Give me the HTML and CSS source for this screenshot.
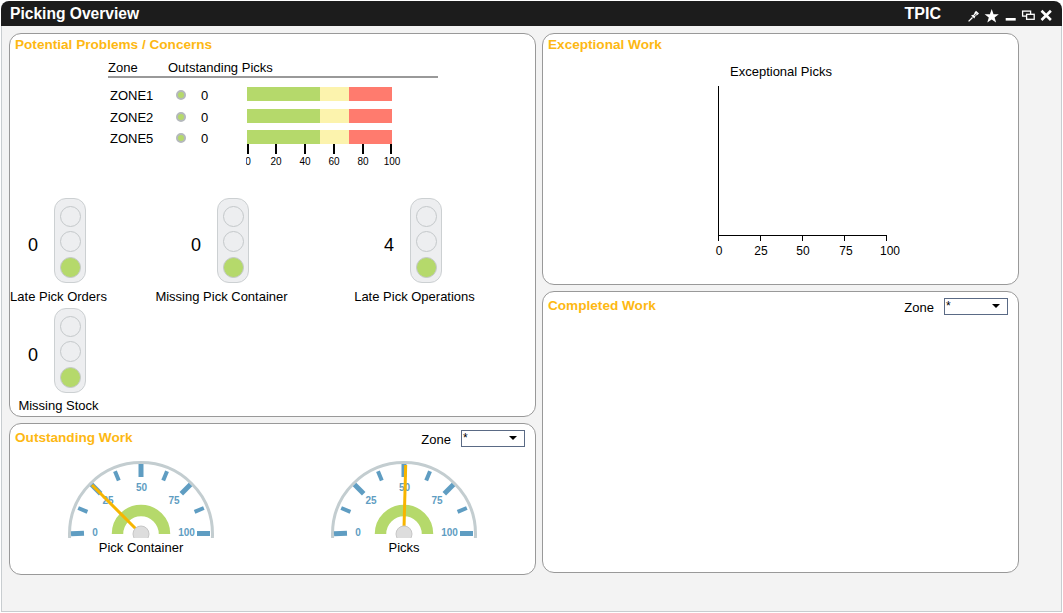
FILE: index.html
```html
<!DOCTYPE html>
<html>
<head>
  <title>Picking Overview</title>
  <link rel="stylesheet" href="styles.css">
</head>
<body>
  <div class="frame">
    <div class="titlebar">
      <span class="app-title">Picking Overview</span>
      <span class="user">TPIC</span>
      <svg class="icon" viewBox="0 0 16 21"><path d="M2.6 18.4 L6.5 14.5" stroke="#fff" stroke-width="1.3"/><path d="M5 12.5 L8 11.5 L8.6 9.4 L10 7.8 L13 10.6 L11.4 12 L9.6 12.8 L8.4 15.6 Z" fill="#fff"/><path d="M8.4 13 L10.6 10.6" stroke="#1c1c1c" stroke-width="0.8"/></svg>
      <svg class="icon" viewBox="0 0 16 21"><polygon points="7.7,6 9.5,11.2 14.8,11.2 10.6,14.4 12.1,19.5 7.7,16.4 3.3,19.5 4.8,14.4 0.6,11.2 5.9,11.2" fill="#fff"/></svg>
      <svg class="icon" viewBox="0 0 16 21"><rect x="3.7" y="15" width="10" height="2.6" fill="#fff"/></svg>
      <svg class="icon" viewBox="0 0 16 21"><rect x="2.6" y="8.1" width="8" height="5" fill="none" stroke="#fff" stroke-width="1.3"/><rect x="6.6" y="11.3" width="7.6" height="5" fill="#1c1c1c" stroke="#fff" stroke-width="1.3"/></svg>
      <svg class="icon" viewBox="0 0 16 21"><path d="M3.5 7.8 L12.9 17 M12.9 7.8 L3.5 17" stroke="#fff" stroke-width="2.6"/></svg>
    </div>

    <div class="content">
      <div class="col col-left">
        <div class="panel panel-problems">
          <div class="panel-title">Potential Problems / Concerns</div>

          <div class="zones">
            <div class="zones-head">
              <span class="zones-head-zone">Zone</span>
              <span>Outstanding Picks</span>
            </div>
            <div class="zones-rows">
              <span class="zone-name">ZONE1</span><span class="dot"></span><span class="zone-val">0</span>
              <div class="bar"><span class="bar-green"></span><span class="bar-yellow"></span><span class="bar-red"></span></div>
              <span class="zone-name">ZONE2</span><span class="dot"></span><span class="zone-val">0</span>
              <div class="bar"><span class="bar-green"></span><span class="bar-yellow"></span><span class="bar-red"></span></div>
              <span class="zone-name">ZONE5</span><span class="dot"></span><span class="zone-val">0</span>
              <div class="bar"><span class="bar-green"></span><span class="bar-yellow"></span><span class="bar-red"></span></div>
            </div>
            <svg class="bar-axis" width="170" height="24">
              <g stroke="#000" stroke-width="2">
                <line x1="2" y1="0" x2="2" y2="10"/>
                <line x1="30" y1="0" x2="30" y2="10"/>
                <line x1="59" y1="0" x2="59" y2="10"/>
                <line x1="88" y1="0" x2="88" y2="10"/>
                <line x1="117" y1="0" x2="117" y2="10"/>
                <line x1="145" y1="0" x2="145" y2="10"/>
              </g>
              <g class="axis-small" text-anchor="middle">
                <text x="2" y="21">0</text>
                <text x="30" y="21">20</text>
                <text x="59" y="21">40</text>
                <text x="88" y="21">60</text>
                <text x="117" y="21">80</text>
                <text x="146" y="21">100</text>
              </g>
            </svg>
          </div>

          <div class="lights">
            <div class="light-item">
              <div class="light-row">
                <span class="light-val">0</span>
                <div class="light"><span class="lamp"></span><span class="lamp"></span><span class="lamp lamp-on"></span></div>
              </div>
              <div class="light-label">Late Pick Orders</div>
            </div>
            <div class="light-item">
              <div class="light-row">
                <span class="light-val">0</span>
                <div class="light"><span class="lamp"></span><span class="lamp"></span><span class="lamp lamp-on"></span></div>
              </div>
              <div class="light-label">Missing Pick Container</div>
            </div>
            <div class="light-item">
              <div class="light-row">
                <span class="light-val">4</span>
                <div class="light"><span class="lamp"></span><span class="lamp"></span><span class="lamp lamp-on"></span></div>
              </div>
              <div class="light-label">Late Pick Operations</div>
            </div>
            <div class="light-item">
              <div class="light-row">
                <span class="light-val">0</span>
                <div class="light"><span class="lamp"></span><span class="lamp"></span><span class="lamp lamp-on"></span></div>
              </div>
              <div class="light-label light-label-tight">Missing Stock</div>
            </div>
          </div>
        </div>

        <div class="panel panel-outstanding">
          <div class="panel-head">
            <div class="panel-title">Outstanding Work</div>
            <div class="zone-filter">
              <span class="zone-filter-name">Zone</span>
              <div class="select">*</div>
            </div>
          </div>
          <div class="gauges">
            <div class="gauge">
              <svg width="150" height="80">
                <circle cx="75" cy="76" r="71.5" fill="none" stroke="#c3cdd0" stroke-width="3"/>
                <g stroke="#5f9dc2">
                  <line x1="5" y1="75.5" x2="18" y2="75.5" stroke-width="5" transform="rotate(-3 11.5 75.5)"/>
                  <line x1="7" y1="76" x2="17" y2="76" stroke-width="4" transform="rotate(22.5 75 76)"/>
                  <line x1="5" y1="76" x2="18" y2="76" stroke-width="5" transform="rotate(45 75 76)"/>
                  <line x1="7" y1="76" x2="17" y2="76" stroke-width="4" transform="rotate(67.5 75 76)"/>
                  <line x1="5" y1="76" x2="18" y2="76" stroke-width="5" transform="rotate(90 75 76)"/>
                  <line x1="7" y1="76" x2="17" y2="76" stroke-width="4" transform="rotate(112.5 75 76)"/>
                  <line x1="5" y1="76" x2="18" y2="76" stroke-width="5" transform="rotate(135 75 76)"/>
                  <line x1="7" y1="76" x2="17" y2="76" stroke-width="4" transform="rotate(157.5 75 76)"/>
                  <line x1="131" y1="75.5" x2="144" y2="75.5" stroke-width="5"/>
                </g>
                <path d="M51.5 76 A23.5 23.5 0 0 1 98.5 76" fill="none" stroke="#b5d96b" stroke-width="11.5"/>
                <g class="gauge-scale" text-anchor="middle">
                  <text x="29" y="78">0</text>
                  <text x="42" y="46">25</text>
                  <text x="75.5" y="33">50</text>
                  <text x="108" y="46">75</text>
                  <text x="120.5" y="78">100</text>
                </g>
                <line x1="26" y1="27" x2="72" y2="73" stroke="#f7b500" stroke-width="3"/>
                <circle cx="75" cy="76" r="8" fill="#ddd" stroke="#c6c6c6"/>
              </svg>
              <div class="gauge-label">Pick Container</div>
            </div>
            <div class="gauge">
              <svg width="150" height="80">
                <circle cx="75" cy="76" r="71.5" fill="none" stroke="#c3cdd0" stroke-width="3"/>
                <g stroke="#5f9dc2">
                  <line x1="5" y1="75.5" x2="18" y2="75.5" stroke-width="5" transform="rotate(-3 11.5 75.5)"/>
                  <line x1="7" y1="76" x2="17" y2="76" stroke-width="4" transform="rotate(22.5 75 76)"/>
                  <line x1="5" y1="76" x2="18" y2="76" stroke-width="5" transform="rotate(45 75 76)"/>
                  <line x1="7" y1="76" x2="17" y2="76" stroke-width="4" transform="rotate(67.5 75 76)"/>
                  <line x1="5" y1="76" x2="18" y2="76" stroke-width="5" transform="rotate(90 75 76)"/>
                  <line x1="7" y1="76" x2="17" y2="76" stroke-width="4" transform="rotate(112.5 75 76)"/>
                  <line x1="5" y1="76" x2="18" y2="76" stroke-width="5" transform="rotate(135 75 76)"/>
                  <line x1="7" y1="76" x2="17" y2="76" stroke-width="4" transform="rotate(157.5 75 76)"/>
                  <line x1="131" y1="75.5" x2="144" y2="75.5" stroke-width="5"/>
                </g>
                <path d="M51.5 76 A23.5 23.5 0 0 1 98.5 76" fill="none" stroke="#b5d96b" stroke-width="11.5"/>
                <g class="gauge-scale" text-anchor="middle">
                  <text x="29" y="78">0</text>
                  <text x="42" y="46">25</text>
                  <text x="75.5" y="33">50</text>
                  <text x="108" y="46">75</text>
                  <text x="120.5" y="78">100</text>
                </g>
                <line x1="76.7" y1="7" x2="75" y2="70" stroke="#f7b500" stroke-width="3"/>
                <circle cx="75" cy="76" r="8" fill="#ddd" stroke="#c6c6c6"/>
              </svg>
              <div class="gauge-label">Picks</div>
            </div>
          </div>
        </div>
      </div>

      <div class="col col-right">
        <div class="panel panel-exceptional">
          <div class="panel-title">Exceptional Work</div>
          <svg class="exc-chart" width="250" height="216">
            <text class="exc-title" x="76" y="21">Exceptional Picks</text>
            <g stroke="#000" fill="none">
              <line x1="64.5" y1="31" x2="64.5" y2="181"/>
              <line x1="64" y1="180.5" x2="233" y2="180.5"/>
              <line x1="64.5" y1="180" x2="64.5" y2="186"/>
              <line x1="106.5" y1="180" x2="106.5" y2="186"/>
              <line x1="148.5" y1="180" x2="148.5" y2="186"/>
              <line x1="190.5" y1="180" x2="190.5" y2="186"/>
              <line x1="232.5" y1="180" x2="232.5" y2="186"/>
            </g>
            <g class="exc-scale" text-anchor="middle">
              <text x="65" y="200">0</text>
              <text x="107" y="200">25</text>
              <text x="149" y="200">50</text>
              <text x="192" y="200">75</text>
              <text x="236" y="200">100</text>
            </g>
          </svg>
        </div>

        <div class="panel panel-completed">
          <div class="panel-head">
            <div class="panel-title">Completed Work</div>
            <div class="zone-filter">
              <span class="zone-filter-name">Zone</span>
              <div class="select">*</div>
            </div>
          </div>
        </div>
      </div>
    </div>
  </div>
</body>
</html>
```

FILE: styles.css
```css
body {
  margin: 0;
  padding: 0;
  background-color: #fff;
  color: #000;
  font-family: "Liberation Sans", Arial, sans-serif;
  font-size: 13px;
}

.frame {
  width: 1061px;
  height: 611px;
  margin: 1px 0 0 1px;
  display: flex;
  flex-direction: column;
}

.titlebar {
  height: 25px;
  flex: none;
  display: flex;
  align-items: center;
  gap: 2px;
  padding: 0 8px 0 9px;
  background-color: #1c1c1c;
  border-radius: 8px 8px 0 0;
  color: #fff;
}

.app-title {
  font-size: 15.6px;
  font-weight: bold;
}

.user {
  margin-left: auto;
  margin-right: 23px;
  font-size: 16px;
  font-weight: bold;
}

.icon {
  width: 16px;
  height: 21px;
}

.content {
  flex: 1;
  display: flex;
  gap: 6px;
  padding: 7px 0 0 7px;
  background-color: #f3f3f3;
  border: 1px solid #c8cdd0;
  border-top: none;
}

.col {
  display: flex;
  flex-direction: column;
  gap: 6px;
}

.col-left {
  width: 527px;
}

.col-right {
  width: 477px;
}

.panel {
  background-color: #fff;
  border: 1px solid #999;
  border-radius: 12px;
  box-sizing: border-box;
}

.panel-problems {
  height: 384px;
}

.panel-outstanding {
  height: 152px;
}

.panel-exceptional {
  height: 252px;
}

.panel-completed {
  height: 282px;
}

.panel-title {
  height: 16px;
  padding: 3px 0 0 5px;
  line-height: 16px;
  font-size: 13.6px;
  font-weight: bold;
  color: #fdb813;
}

.panel-head {
  display: flex;
  justify-content: space-between;
  align-items: flex-start;
  padding: 3px 10px 0 0;
}

.zone-filter {
  display: flex;
  align-items: center;
  gap: 10px;
  margin-top: 3px;
}

.zone-filter-name {
  padding-top: 2px;
}

.select {
  position: relative;
  width: 64px;
  height: 17px;
  box-sizing: border-box;
  padding-left: 1px;
  border: 1px solid #5a6a85;
  line-height: 14px;
  font-size: 12px;
}

.select::after {
  content: "";
  position: absolute;
  top: 5px;
  right: 7px;
  border-style: solid;
  border-width: 4px 4px 0;
  border-color: #000 transparent transparent;
}

/* zone table */
.zones {
  margin: 7px 0 0 98px;
}

.zones-head {
  display: flex;
  width: 330px;
  height: 16px;
  line-height: 16px;
  border-bottom: 2px solid #999;
}

.zones-head-zone {
  width: 60px;
}

.zones-rows {
  display: grid;
  grid-template-columns: 66px 10px 61px 145px;
  grid-auto-rows: 14px;
  row-gap: 7.5px;
  align-items: center;
  margin: 9px 0 0 2px;
}

.zone-name {
  padding-top: 3px;
}

.dot {
  width: 6px;
  height: 6px;
  margin-top: 2px;
  background-color: #b5d96b;
  border: 2px solid #b4b8bc;
  border-radius: 50%;
}

.zone-val {
  padding: 3px 0 0 15px;
}

.bar {
  display: flex;
  height: 14px;
}

.bar-green {
  width: 73px;
  background-color: #b5d96b;
}

.bar-yellow {
  width: 29px;
  background-color: #fcf3ad;
}

.bar-red {
  width: 43px;
  background-color: #ff7b6e;
}

.bar-axis {
  display: block;
  margin-left: 138px;
}

.axis-small {
  font-size: 10px;
}

/* traffic lights */
.lights {
  display: grid;
  grid-template-columns: 97px 229px 157px;
  row-gap: 3px;
  margin-top: 30px;
}

.light-item {
  display: flex;
  flex-direction: column;
  align-items: center;
  white-space: nowrap;
}

.light-row {
  display: flex;
  align-items: center;
  gap: 9px;
  padding-right: 10px;
}

.light-val {
  width: 24px;
  padding-top: 10px;
  text-align: center;
  font-size: 18px;
}

.light {
  display: flex;
  flex-direction: column;
  align-items: center;
  gap: 4px;
  width: 32px;
  height: 85px;
  box-sizing: border-box;
  padding-top: 7px;
  background-color: #edeef0;
  border: 1px solid #ccd0d2;
  border-radius: 12px;
}

.lamp {
  width: 19px;
  height: 19px;
  flex: none;
  background-color: #edeef0;
  border: 1px solid #c4c8ca;
  border-radius: 50%;
}

.lamp-on {
  margin-top: 1px;
  background-color: #b5d96b;
}

.light-label {
  margin-top: 6px;
  line-height: 16px;
}

.light-label-tight {
  margin-top: 5px;
}

/* gauges */
.gauges {
  display: flex;
  gap: 113px;
  margin-top: 11px;
  padding-left: 56px;
}

.gauge {
  width: 150px;
  text-align: center;
}

.gauge svg {
  display: block;
}

.gauge-label {
  margin-top: 2px;
  line-height: 16px;
}

.gauge-scale {
  font-size: 10px;
  font-weight: bold;
  fill: #5f9dc2;
}

/* exceptional chart */
.exc-chart {
  display: block;
  margin: 2px 0 0 111px;
}

.exc-title {
  font-size: 13px;
}

.exc-scale {
  font-size: 12px;
}
```
